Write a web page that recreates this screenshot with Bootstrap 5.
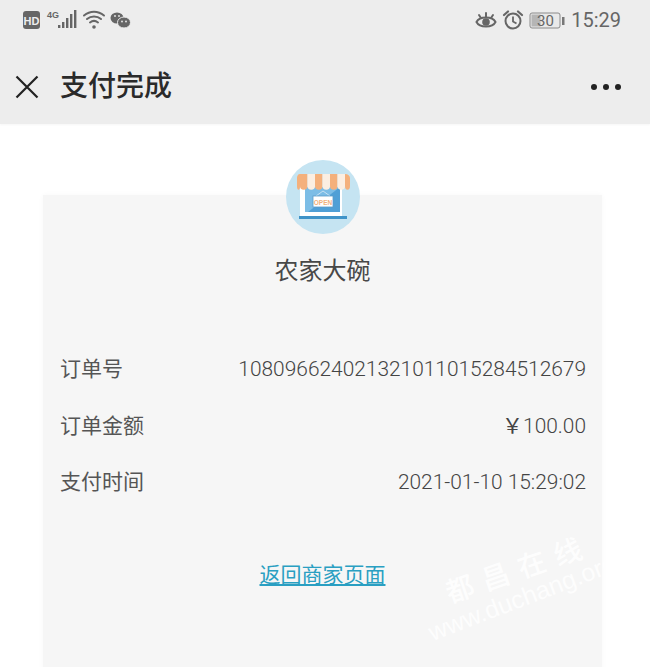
<!DOCTYPE html>
<html lang="zh-CN">

<head>
    <meta charset="UTF-8">
    <meta name="viewport" content="width=device-width, initial-scale=1.0">
    <title>支付完成</title>
    <link href="https://cdn.jsdelivr.net/npm/bootstrap@5.3.3/dist/css/bootstrap.min.css" rel="stylesheet">
    <style>
        html, body {
            height: 667px;
            overflow: hidden;
        }

        body {
            background: #fff;
            font-family: "Liberation Sans", "Noto Sans CJK SC", sans-serif;
            color: #555;
        }

        .top-head {
            height: 124px;
            background: #ededed;
            box-shadow: 0 1px 2px rgba(0, 0, 0, 0.04);
        }

        .status-bar {
            height: 40px;
            padding: 9px 29px 0 22px;
            color: #666;
        }

        .status-gap {
            margin-left: 5px;
        }

        .status-time {
            font-family: "Roboto", sans-serif;
            font-size: 20px;
            line-height: 22px;
            color: #666;
            margin-left: 6px;
        }

        .title-bar {
            height: 84px;
            padding: 10px 29px 0 15px;
        }

        .title-text {
            font-size: 28px;
            font-weight: 500;
            color: #2a2a2a;
            margin-left: 21px;
            line-height: 1;
        }

        .more-dots {
            gap: 6px;
        }

        .more-dots i {
            display: block;
            width: 6px;
            height: 6px;
            border-radius: 50%;
            background: #222;
        }

        .pay-sheet {
            display: flow-root;
            margin: 71px 48px 0 43px;
            height: 480px;
            background: #f6f6f6;
            box-shadow: 0 0 6px rgba(0, 0, 0, 0.03);
        }

        .shop-logo {
            display: block;
            margin: -35px auto 0;
        }

        .shop-name {
            font-size: 24px;
            line-height: 32px;
            color: #484848;
            margin-top: 21px;
            margin-bottom: 68px;
        }

        .pay-rows {
            padding: 0 16px 0 17px;
            font-size: 21px;
            line-height: 28px;
            gap: 28.5px;
        }

        .pay-value {
            font-family: "Roboto", sans-serif;
            font-weight: 300;
            color: #444;
            font-size: 20.9px;
        }

        .back-link {
            font-size: 21px;
            line-height: 28px;
            color: #2a9fc2;
        }

        .back-row {
            margin-top: 65px;
        }

        .water-mark {
            position: absolute;
            left: 434px;
            top: 620px;
            color: rgba(255, 255, 255, 0.8);
            font-size: 25px;
            white-space: nowrap;
            transform: rotate(-21deg);
            transform-origin: left bottom;
            line-height: 1;
        }

        .water-cn {
            position: absolute;
            left: 446px;
            top: 578px;
            color: rgba(255, 255, 255, 0.85);
            font-size: 28px;
            font-weight: 500;
            font-family: "Noto Sans CJK SC", sans-serif;
            letter-spacing: 10px;
            white-space: nowrap;
            transform: rotate(-19deg);
            transform-origin: left center;
            line-height: 1;
        }
    </style>
</head>

<body>
    <div class="top-head">
        <div class="status-bar d-flex align-items-start justify-content-between">
            <svg width="110" height="22" viewBox="0 0 110 22">
                <rect x="1" y="2" width="17" height="18" rx="3" fill="#666"/>
                <text x="9.500" y="15.500" font-size="11" font-weight="700" fill="#eee" text-anchor="middle" font-family="Liberation Sans">HD</text>
                <text x="25" y="9" font-size="9" font-weight="700" fill="#666" font-family="Liberation Sans">4G</text>
                <rect x="36" y="16" width="2.400" height="3" fill="#666"/>
                <rect x="40" y="13" width="2.400" height="6" fill="#666"/>
                <rect x="44" y="9" width="2.400" height="10" fill="#666"/>
                <rect x="48" y="5" width="2.400" height="14" fill="#666"/>
                <rect x="52" y="1" width="2.400" height="18" fill="#666"/>
                <g fill="none" stroke="#666" stroke-width="2" stroke-linecap="round">
                    <path d="M62 6.500c6-5 14-5 20 0"/>
                    <path d="M65 10c4-3.500 10-3.500 14 0"/>
                    <path d="M68 13.500c2.500-2 5.500-2 8 0"/>
                </g>
                <circle cx="72" cy="18" r="1.800" fill="#666"/>
                <ellipse cx="95" cy="9" rx="6.500" ry="5.500" fill="#666"/>
                <ellipse cx="102" cy="13.500" rx="6.500" ry="5.500" fill="#666" stroke="#ededed"/>
                <circle cx="100" cy="12.500" r="0.900" fill="#ededed"/>
                <circle cx="104" cy="12.500" r="0.900" fill="#ededed"/>
                <circle cx="93" cy="7" r="0.900" fill="#ededed"/>
                <circle cx="97" cy="7" r="0.900" fill="#ededed"/>
            </svg>
            <div class="d-flex align-items-center">
                <svg width="22" height="22" viewBox="0 0 22 22">
                    <path d="M1.500 13c3-6 16-6 19 0c-3 6-16 6-19 0z" fill="none" stroke="#666" stroke-width="2"/>
                    <circle cx="11" cy="13" r="3.800" fill="#666"/>
                    <path d="M4 6l2 3M11 4v4M18 6l-2 3" stroke="#666" stroke-width="2" stroke-linecap="round"/>
                </svg>
                <svg width="22" height="22" viewBox="0 0 22 22" class="status-gap">
                    <circle cx="11" cy="12" r="7.500" fill="none" stroke="#666" stroke-width="2"/>
                    <path d="M11 7.500V12.500l3.500 2" fill="none" stroke="#666" stroke-width="1.800"/>
                    <path d="M2 6l4-3.500M20 6l-4-3.500" stroke="#666" stroke-width="2.200" stroke-linecap="round"/>
                </svg>
                <svg width="36" height="22" viewBox="0 0 36 22" class="status-gap">
                    <rect x="1" y="4" width="30" height="15" rx="2" fill="#e9e9e9" stroke="#8a8a8a"/>
                    <rect x="2.500" y="5.500" width="9" height="12" fill="#b5b5b5"/>
                    <rect x="33" y="8" width="2.500" height="8" fill="#777"/>
                    <text x="16.500" y="17" font-size="15" fill="#666" text-anchor="middle" font-family="Roboto">30</text>
                </svg>
                <span class="status-time">15:29</span>
            </div>
        </div>
        <div class="title-bar d-flex align-items-center">
            <svg width="24" height="24" viewBox="0 0 24 24">
                <path d="M1.500 1.500L22.500 22.500M22.500 1.500L1.500 22.500" stroke="#222" stroke-width="2.200" fill="none"/>
            </svg>
            <span class="title-text">支付完成</span>
            <div class="more-dots d-flex ms-auto">
                <i></i><i></i><i></i>
            </div>
        </div>
    </div>

    <div class="pay-sheet">
        <svg class="shop-logo" width="74" height="74" viewBox="0 0 74 74">
            <circle cx="37" cy="37" r="37" fill="#c5e4f2"/>
            <rect x="14" y="27" width="42" height="31" fill="#fff"/>
            <rect x="19" y="27" width="35" height="25" fill="#7cbde6"/>
            <path d="M54 27V52H22z" fill="#4f9fd6"/>
            <rect x="13" y="56" width="48" height="3" fill="#3f93c8"/>
            <path d="M14 14h7.500v12a3.750 3.750 0 0 1-7.500 0zM29 14h7.500v12a3.750 3.750 0 0 1-7.500 0zM44 14h7.500v12a3.750 3.750 0 0 1-7.500 0z" fill="#f4b07c"/>
            <path d="M21.500 14h7.500v12a3.750 3.750 0 0 1-7.500 0zM36.500 14h7.500v12a3.750 3.750 0 0 1-7.500 0zM51.500 14h7.500v12a3.750 3.750 0 0 1-7.500 0z" fill="#fbeee2"/>
            <path d="M59 14c3 0 5 2 5 4v8a2.500 3.750 0 0 1-5 0zM14 14c-2 0-3 2-3 4v8a1.500 3.750 0 0 0 3 0z" fill="#f4b07c"/>
            <path d="M37 31l-7 5M37 31l7 5" stroke="#d9eaf5" stroke-width="0.800" fill="none"/>
            <rect x="27" y="36" width="20" height="11" fill="#fff" stroke="#5b9cc8" stroke-width="0.800"/>
            <text x="37" y="44.500" font-size="6.500" font-weight="700" fill="#f2b27c" text-anchor="middle" font-family="Liberation Sans">OPEN</text>
        </svg>
        <div class="shop-name text-center">农家大碗</div>
        <div class="pay-rows d-flex flex-column">
            <div class="d-flex justify-content-between">
                <span>订单号</span>
                <span class="pay-value">108096624021321011015284512679</span>
            </div>
            <div class="d-flex justify-content-between">
                <span>订单金额</span>
                <span class="pay-value">￥100.00</span>
            </div>
            <div class="d-flex justify-content-between">
                <span>支付时间</span>
                <span class="pay-value">2021-01-10 15:29:02</span>
            </div>
        </div>
        <div class="text-center back-row">
            <a href="#" class="back-link">返回商家页面</a>
        </div>
    </div>

    <div class="water-cn">都昌在线</div>
    <div class="water-mark">www.duchang.org</div>

    <script src="https://cdn.jsdelivr.net/npm/bootstrap@5.3.3/dist/js/bootstrap.bundle.min.js"></script>
</body>

</html>
